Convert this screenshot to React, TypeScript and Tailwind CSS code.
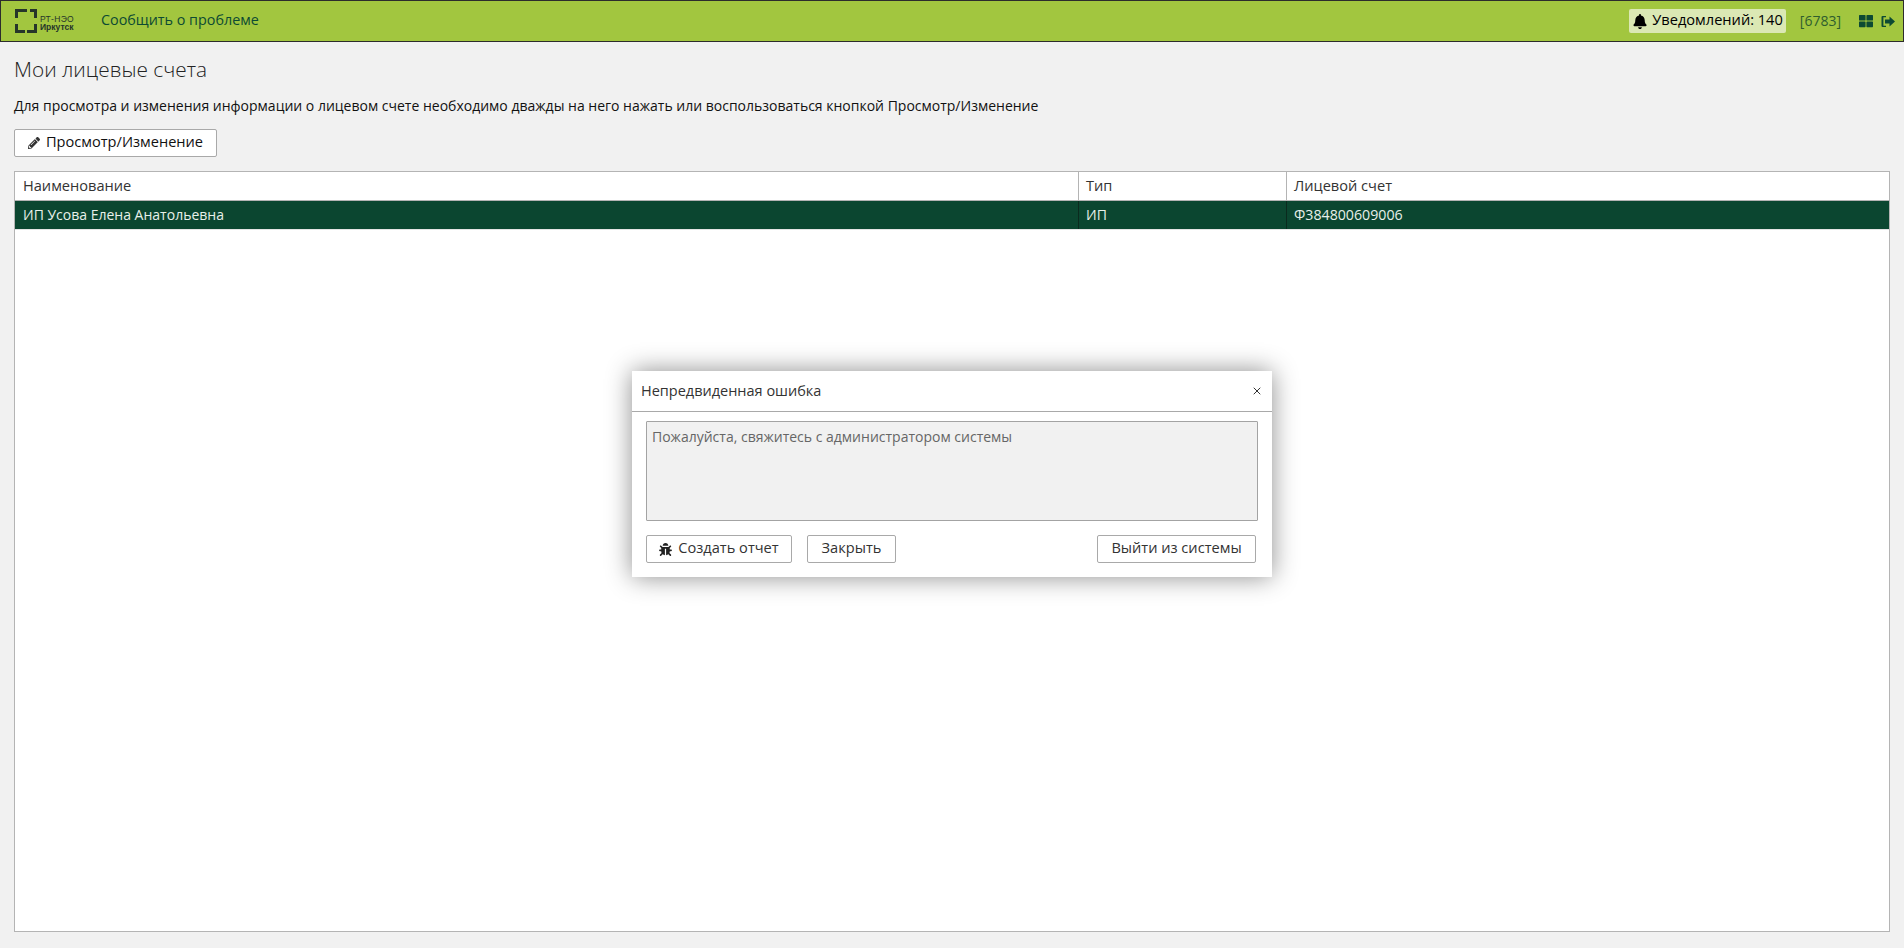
import { X } from "lucide-react";
import { FaBell, FaBug, FaPencilAlt, FaThLarge } from "react-icons/fa";

function Logo() {
  return (
    <div className="flex items-center gap-[3px]">
      <svg width="22" height="24" viewBox="0 0 22 24" fill="#26352a">
        <path d="M0 0h12v3H3v6H0zM15 0h7v9h-3V3h-4zM0 15h3v6h7v3H0zM19 15h3v9H12v-3h7z" />
      </svg>
      <div className="mt-[3px] flex flex-col text-[#26352a] text-[8.5px] font-bold leading-[8px] font-['Liberation_Sans',sans-serif]">
        <span className="font-normal tracking-[0.3px]">РТ-НЭО</span>
        <span>Иркутск</span>
      </div>
    </div>
  );
}

function LogoutIcon() {
  return (
    <svg width="14" height="13" viewBox="0 0 14 13" fill="#0d4a33" className="ml-[8px]">
      <path d="M1.5 1H5v1.3H2.4v8.4H5V12H1.5Q0.5 12 0.5 11V2Q0.5 1 1.5 1z" />
      <path d="M4 4.5h4.5V1.5L14 6.5l-5.5 5v-3H4z" />
    </svg>
  );
}

export default function App() {
  return (
    <div className="relative h-[948px] w-full overflow-hidden bg-[#f1f1f1] font-['Open_Sans',sans-serif] text-[14px] text-[#111]">
      <header className="flex h-[42px] items-center justify-between border border-[#2c2c2c] bg-[#a2c63f] pl-[14px] pr-[8px]">
        <div className="flex items-center">
          <Logo />
          <a className="ml-[27px] -translate-y-[1px] text-[14.35px] text-[#0d4a33]">Сообщить о проблеме</a>
        </div>
        <div className="flex items-center">
          <div className="flex h-[24px] items-center gap-[5px] rounded-[2px] bg-[#dbe8b4] pl-[4px] pr-[3px] text-[14.6px] text-black">
            <FaBell className="h-[15px] w-[14px]" />
            <span className="-translate-y-[1px]">Уведомлений: 140</span>
          </div>
          <span className="ml-[14px] -translate-y-[1px] text-[14px] text-[#2f5e2e]">[6783]</span>
          <FaThLarge className="ml-[18px] h-[14px] w-[14px] text-[#0d4a33]" />
          <LogoutIcon />
        </div>
      </header>

      <main className="flex h-[906px] flex-col px-[14px] pb-[16px]">
        <h1 className="mt-[14px] text-[20.8px] font-light leading-[27px] text-[#222]">Мои лицевые счета</h1>
        <p className="mt-[13px] leading-[19px] text-[#111]">
          Для просмотра и изменения информации о лицевом счете необходимо дважды на него нажать или воспользоваться кнопкой Просмотр/Изменение
        </p>
        <button className="mt-[14px] flex h-[28px] w-[203px] items-center justify-center gap-[6px] rounded-[2px] border border-[#a9a9a9] bg-white text-[14.6px] text-[#111]">
          <FaPencilAlt className="h-[12px] w-[12px] text-[#333]" />
          <span className="-translate-y-[1px]">Просмотр/Изменение</span>
        </button>
        <div className="mt-[14px] flex min-h-0 flex-1 flex-col border border-[#b4b4b4] bg-white">
          <div className="grid h-[29px] grid-cols-[1064px_208px_1fr] items-stretch border-b border-[#b4b4b4] text-[14.6px] text-[#333]">
            <div className="flex items-center border-r border-[#b4b4b4] pl-[8px]">Наименование</div>
            <div className="flex items-center border-r border-[#b4b4b4] pl-[7px]">Тип</div>
            <div className="flex items-center pl-[7px]">Лицевой счет</div>
          </div>
          <div className="grid h-[29px] grid-cols-[1064px_208px_1fr] items-stretch border-b border-[#e4e4e4] bg-[#0b4630] text-[#e8f0ea]">
            <div className="flex items-center border-r border-[#0a2a1e] pb-[2px] pl-[8px]">ИП Усова Елена Анатольевна</div>
            <div className="flex items-center border-r border-[#0a2a1e] pb-[2px] pl-[7px]">ИП</div>
            <div className="flex items-center pl-[7px] text-[14.2px]">Ф384800609006</div>
          </div>
        </div>
      </main>

      <div className="absolute left-[632px] top-[371px] flex h-[206px] w-[640px] flex-col bg-white shadow-[0_0_24px_rgba(0,0,0,0.45)]">
        <div className="flex h-[41px] items-center justify-between border-b border-[#a9a9a9] pl-[9px] pr-[9px] text-[14.5px] text-[#333]">
          <span>Непредвиденная ошибка</span>
          <X className="h-[12px] w-[12px]" strokeWidth={2} />
        </div>
        <div className="flex flex-1 flex-col px-[14px] pt-[9px]">
          <div className="h-[100px] rounded-[1px] border border-[#a3a3a3] bg-[#f1f1f1] px-[5px] pt-[5px] leading-[19px] text-[#666]">
            Пожалуйста, свяжитесь с администратором системы
          </div>
          <div className="mt-[14px] flex items-center">
            <button className="flex h-[28px] w-[146px] items-center justify-center gap-[6px] rounded-[2px] border border-[#a9a9a9] bg-white text-[14.6px] text-[#333]">
              <FaBug className="h-[13px] w-[13px] text-[#222]" />
              <span className="-translate-y-[1px]">Создать отчет</span>
            </button>
            <button className="ml-[15px] h-[28px] w-[89px] rounded-[2px] border border-[#a9a9a9] bg-white pb-[2px] text-[14.6px] text-[#333]">Закрыть</button>
            <button className="ml-auto mr-[2px] h-[28px] w-[159px] rounded-[2px] border border-[#a9a9a9] bg-white pb-[2px] text-[14.6px] text-[#333]">Выйти из системы</button>
          </div>
        </div>
      </div>
    </div>
  );
}
